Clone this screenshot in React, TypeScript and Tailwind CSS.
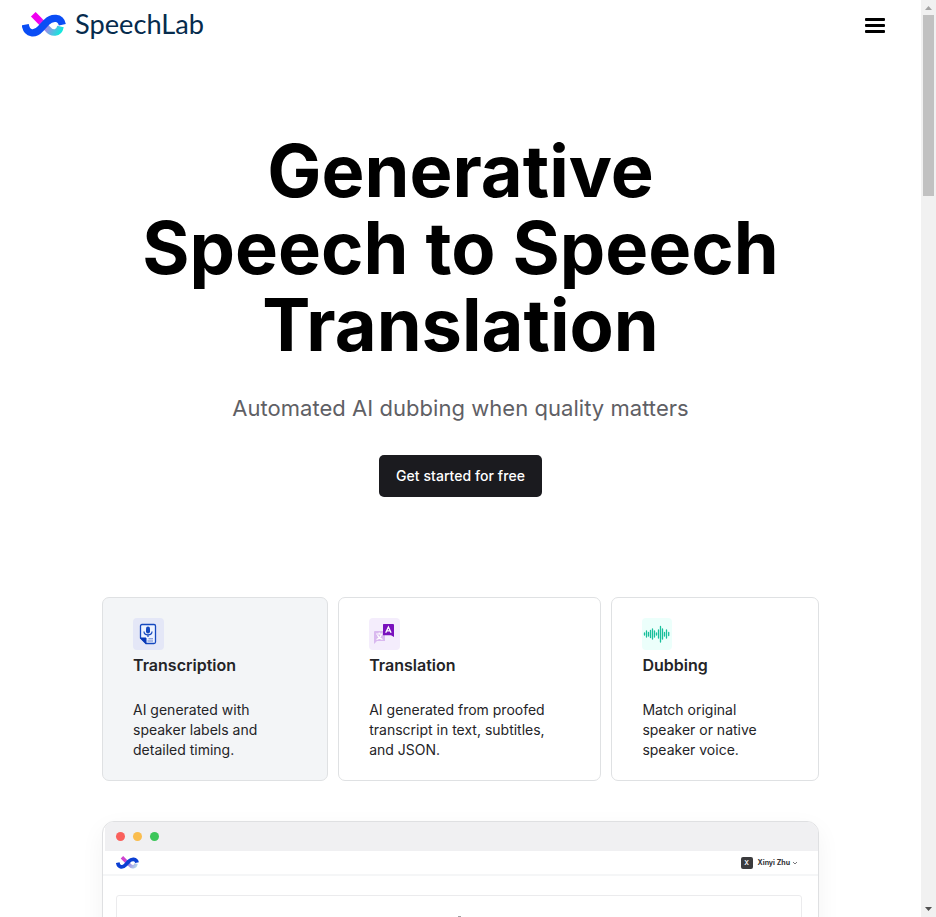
import React from "react";

interface MarkProps {
  id: string;
  className: string;
  start?: string;
  end?: string;
  blue?: string;
}

function Mark({ id, className, start = "#f000f0", end = "#12e8dc", blue = "#0a4df5" }: MarkProps) {
  return (
    <svg viewBox="0 0 44 25" className={className} fill="none">
      <defs>
        <linearGradient id={id} x1="12" y1="2" x2="40" y2="18" gradientUnits="userSpaceOnUse">
          <stop offset="0" stopColor={start} />
          <stop offset="0.25" stopColor={start} />
          <stop offset="0.55" stopColor="#a08be8" />
          <stop offset="1" stopColor={end} />
        </linearGradient>
      </defs>
      <path d="M11.300 2.300L25 16.200C30 22.500 37 22 38.500 14.500" stroke={`url(#${id})`} strokeWidth="6.600" />
      <path d="M3.200 12.700C5 22.800 13 22.800 18.500 16.800L24.500 10.300C30 4.700 38.700 4.700 40.300 12.700" stroke={blue} strokeWidth="7.200" />
    </svg>
  );
}

function TranscriptIcon() {
  return (
    <svg viewBox="0 0 31 32" className="h-8 w-[31px]" fill="none">
      <rect width="31" height="32" rx="4" fill="#e4e7f7" />
      <path d="M9 6.500H21Q22.500 6.500 22.500 8V24Q22.500 25.500 21 25.500H13L7.500 20V8Q7.500 6.500 9 6.500Z" fill="#edf2ff" stroke="#1548bf" strokeWidth="1.300" />
      <path d="M7.500 20H13V25.500Z" fill="#0838b8" stroke="#0838b8" />
      <rect x="13" y="8.500" width="4" height="7" rx="2" fill="#1548bf" />
      <path d="M11 13.500C11 18 19 18 19 13.500M15 17V19" stroke="#1548bf" strokeWidth="1.200" />
      <path d="M15.500 20.800H20M14.500 23H20" stroke="#6681cf" />
    </svg>
  );
}

function TranslateIcon() {
  return (
    <svg viewBox="0 0 31 32" className="h-8 w-[31px]" fill="none">
      <rect width="31" height="32" rx="4" fill="#f4edfc" />
      <path d="M6 13H16V23H8L5 26V14Q5 13 6 13Z" fill="#d9b9ef" />
      <path d="M7 16H13.500M10.200 14.500V16M12.500 16Q11.500 20 7.500 21.500M8.500 17Q9.500 20 13.500 21.500" stroke="#fff" strokeWidth="1.100" />
      <path d="M14.500 6H24Q25 6 25 7V19L22 17.300H14V7Q14 6 14.500 6Z" fill="#7910bd" />
      <path d="M16.700 14.700L19.400 9L22.100 14.700M17.700 12.900H21.100" stroke="#fff" strokeWidth="1.300" />
    </svg>
  );
}

function WaveIcon() {
  return (
    <svg viewBox="0 0 30 32" className="h-8 w-[30px]" fill="none">
      <rect width="30" height="32" rx="4" fill="#ecfffb" />
      <path d="M2.500 15V17M4.500 13V19M6.500 14.500V18M8.500 12.500V19.500M10.500 11V21M12.500 13V19M14.500 15V17M16.500 12V20M18.500 8.500V24M20.500 11V21M22.500 14.500V18M24.500 12V20M26.700 14.500V17.500" stroke="#18bf9b" strokeWidth="1.300" strokeLinecap="round" />
    </svg>
  );
}

function Card({ icon, title, lines, className }: { icon: React.ReactNode; title: string; lines: string[]; className: string }) {
  return (
    <article className={`h-[184px] rounded-[7px] border border-[#dfe1e3] pt-5 text-[#242427] ${className}`}>
      {icon}
      <h2 className="mt-[3px] text-[16px] leading-6 font-semibold">{title}</h2>
      <p className="mt-[23px] text-[14px] leading-5 whitespace-nowrap">
        {lines.map((line) => <span key={line} className="block">{line}</span>)}
      </p>
    </article>
  );
}

export default function App() {
  return (
    <div className="flex h-[917px] w-full overflow-hidden bg-white font-['Inter',sans-serif]">
      <div className="flex min-w-0 flex-1 flex-col">
        <header className="flex h-[50px] shrink-0 items-start justify-between pr-9 pl-[22px]">
          <div className="flex">
            <Mark id="brand" className="mt-3 h-[25px] w-11" />
            <svg viewBox="0 0 140 40" className="ml-[7px] h-10 w-[140px]">
              <text x="2" y="33.500" textLength="129" lengthAdjust="spacingAndGlyphs" fill="#062b4d" className="font-['Lato',sans-serif] text-[26px]">SpeechLab</text>
            </svg>
          </div>
          <div className="mt-[18px] flex flex-col gap-[3px]">
            <i className="h-[3px] w-5 rounded-[1px] bg-black" />
            <i className="h-[3px] w-5 rounded-[1px] bg-black" />
            <i className="h-[3px] w-5 rounded-[1px] bg-black" />
          </div>
        </header>
        <main className="flex flex-1 flex-col items-center">
          <h1 className="mt-[82px] text-center text-[72.2px] leading-[77px] font-bold text-black">
            Generative<br />Speech to Speech<br />Translation
          </h1>
          <p className="mt-[29px] text-[22px] leading-[33px] tracking-[0.04px] text-[#5f6065]">Automated AI dubbing when quality matters</p>
          <button className="mt-[30px] h-[42px] w-[163px] shrink-0 rounded-[5px] bg-[#1b1b1f] pb-[2px] text-[14px] font-medium tracking-[0.06px] whitespace-nowrap text-white">Get started for free</button>
          <section className="mt-[100px] flex w-[717px] gap-[10px]">
            <Card className="w-[226px] bg-[#f3f5f7] pl-[30px]" icon={<TranscriptIcon />} title="Transcription" lines={["AI generated with", "speaker labels and", "detailed timing."]} />
            <Card className="w-[263px] pl-[30.200px]" icon={<TranslateIcon />} title="Translation" lines={["AI generated from proofed", "transcript in text, subtitles,", "and JSON."]} />
            <Card className="w-[208px] pl-[30.400px]" icon={<WaveIcon />} title="Dubbing" lines={["Match original", "speaker or native", "speaker voice."]} />
          </section>
          <section className="mt-10 h-[140px] w-[717px] shrink-0 overflow-hidden rounded-t-[12px] border border-[#dfe0e2] bg-white shadow-[0_8px_24px_rgba(0,0,0,0.05)]">
            <div className="ml-[2px] flex h-[29px] items-center gap-2 bg-[#f0f0f2] pl-[11px]">
              <i className="h-[9px] w-[9px] rounded-full bg-[#fa605c]" />
              <i className="h-[9px] w-[9px] rounded-full bg-[#fabd4e]" />
              <i className="h-[9px] w-[9px] rounded-full bg-[#3cc65a]" />
            </div>
            <div className="flex h-[25px] items-center border-b-2 border-[#f5f6f7] pr-[20px] pl-[13px]">
              <Mark id="preview" className="h-[13px] w-[23px]" start="#cf45cf" end="#b5d5e8" blue="#0b3fd3" />
              <span className="ml-auto flex h-3 w-3 items-center justify-center rounded-[2px] bg-[#3b3b3d] pt-px text-[6.500px] leading-3 font-semibold text-white">X</span>
              <span className="ml-[5px] pt-px text-[7px] leading-3 font-bold text-[#303033]">Xinyi Zhu</span>
              <svg viewBox="0 0 6 4" className="ml-[2px] h-1 w-[6px]" fill="none"><path d="M1 1L3 3L5 1" stroke="#55565a" strokeWidth="0.800" /></svg>
            </div>
            <div className="mx-[13px] mr-4 mt-[19px] flex h-20 justify-center rounded-[3px] border border-[#ebebed]">
              <i className="mt-[20px] h-[2px] w-[3px] bg-[#a0a1a4]" />
            </div>
          </section>
        </main>
      </div>
      <aside className="flex w-[15px] shrink-0 flex-col items-center bg-[#f1f1f1]">
        <svg viewBox="0 0 15 15" className="h-[15px] w-[15px]"><path d="M4 10L7.500 6L11 10Z" fill="#a3a3a3" /></svg>
        <div className="h-[181px] w-[11px] bg-[#c1c1c1]" />
        <svg viewBox="0 0 15 15" className="mt-auto h-[15px] w-[15px]"><path d="M4 5L7.500 9L11 5Z" fill="#505050" /></svg>
      </aside>
    </div>
  );
}
